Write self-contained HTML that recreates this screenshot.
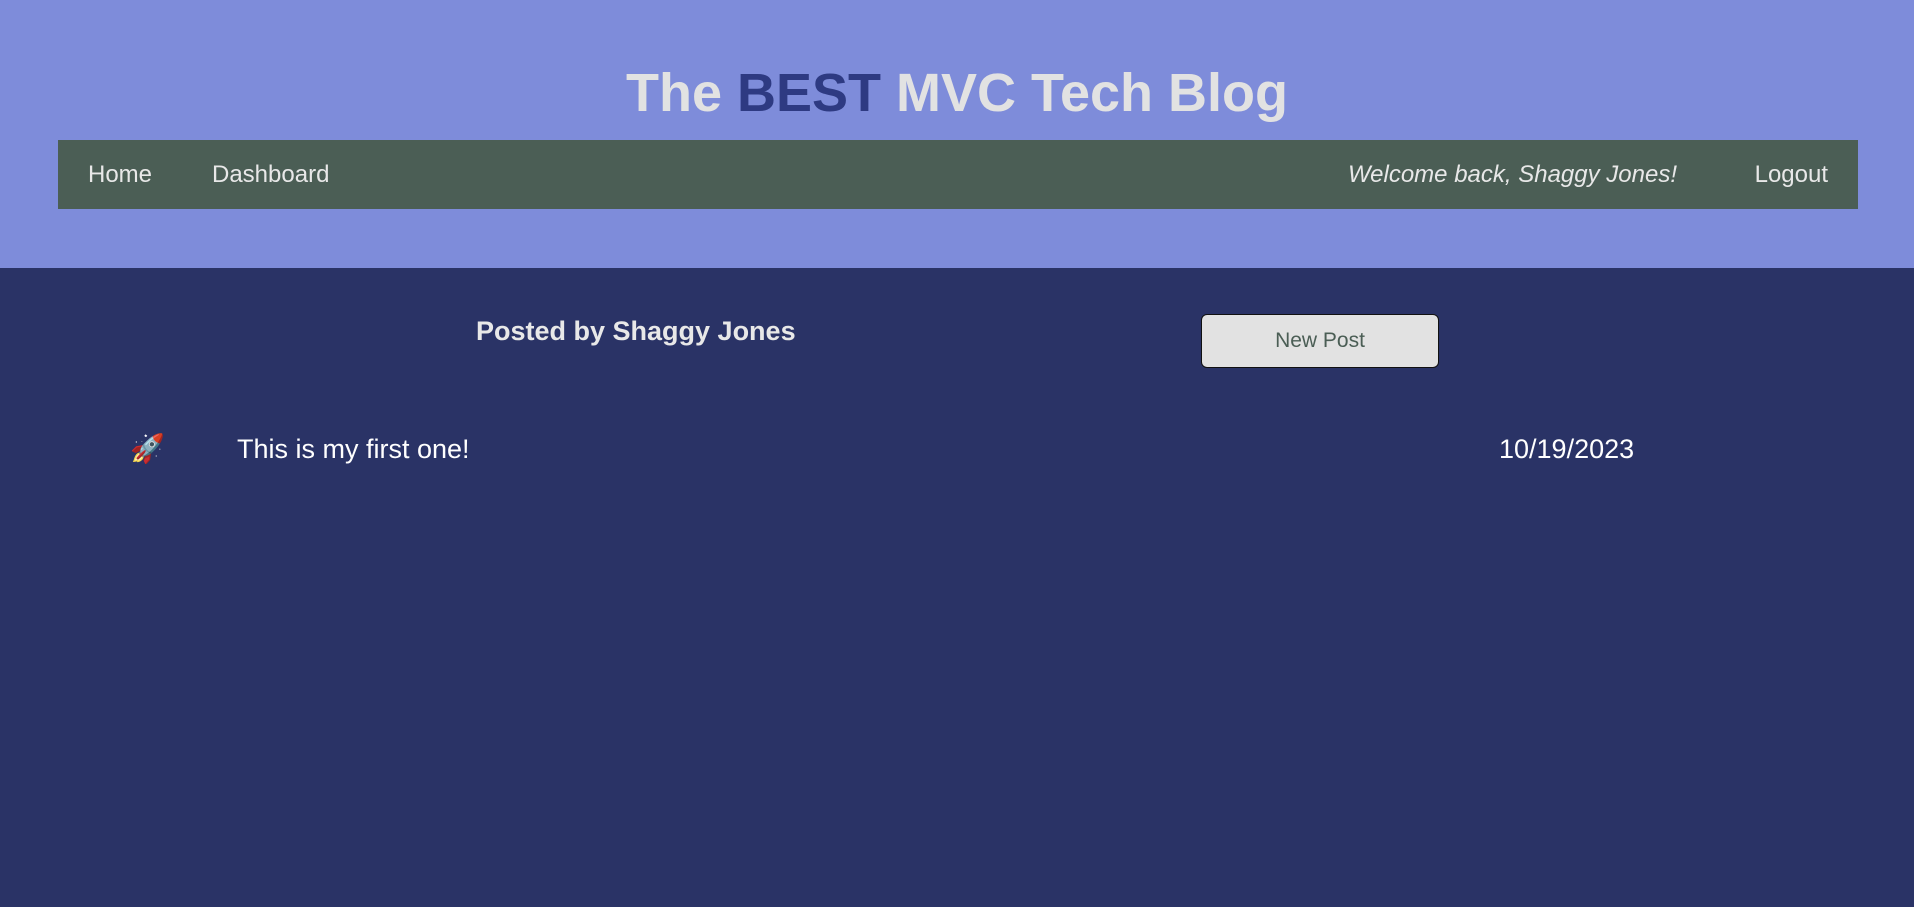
<!DOCTYPE html>
<html><head><meta charset="utf-8"><style>
body{margin:0;width:1914px;height:907px;background:#2a3366;font-family:"Liberation Sans",Arial,sans-serif;overflow:hidden;position:relative}
.hdr{position:absolute;left:0;top:0;width:1914px;height:268px;background:#7e8cda}
h1{position:absolute;left:0;width:1914px;top:60px;margin:0;text-align:center;font-size:54px;font-weight:bold;color:#e2e2e2;line-height:66px}
h1 span{color:#2e3a82}
nav{position:absolute;left:58px;top:140px;width:1800px;height:69px;background:#4b5e55;color:#e8e8e8;font-size:24px}
nav div{position:absolute;top:0;line-height:69px}
.t{position:absolute;color:#fff;font-size:27px}
.btn{position:absolute;left:1201px;top:314px;width:236px;height:52px;background:#e2e2e2;border:1px solid #111;border-radius:6px;color:#4b5e55;font-size:21px;text-align:center;line-height:52px}
</style></head><body>
<div class="hdr"></div>
<h1>The <span>BEST</span> MVC Tech Blog</h1>
<nav>
<div style="left:30px">Home</div>
<div style="left:154px">Dashboard</div>
<div style="right:181px;font-style:italic">Welcome back, Shaggy Jones!</div>
<div style="right:30px">Logout</div>
</nav>
<div class="t" style="left:476px;top:316px;font-weight:bold;color:#e8e8e8">Posted by Shaggy Jones</div>
<div class="btn">New Post</div>
<div class="t" style="left:130px;top:432px;font-size:28px">🚀</div>
<div class="t" style="left:237px;top:434px">This is my first one!</div>
<div class="t" style="left:1499px;top:434px">10/19/2023</div>
</body></html>
